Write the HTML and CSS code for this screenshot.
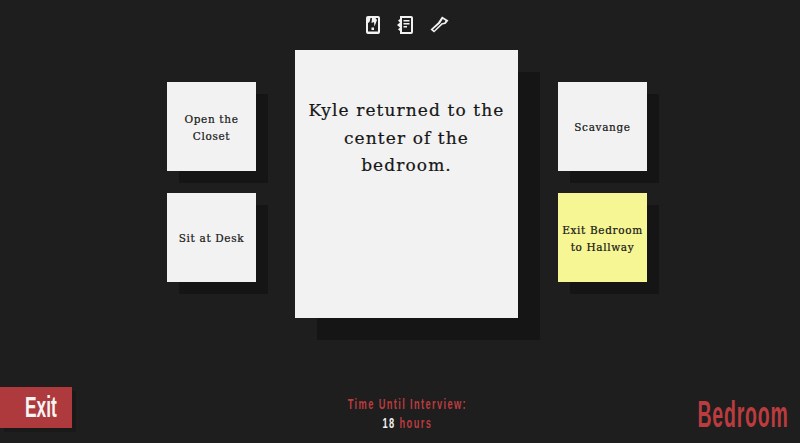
FILE: index.html
```html
<!DOCTYPE html>
<html lang="en">
<head>
<meta charset="utf-8">
<title>Bedroom</title>
<link rel="stylesheet" href="styles.css">
</head>
<body>
<div class="page">
  <nav class="tools">
    <svg class="icon" viewBox="0 0 14 18"><path fill="#f2f2f2" fill-rule="evenodd" d="M2 0H12Q14 0 14 2V16Q14 18 12 18H2Q0 18 0 16V2Q0 0 2 0ZM2 2V15.500H12V2H9.500L11 4 8.500 10.500 8 6 5.500 7 6 2Z"/><path fill="#f2f2f2" d="M5.500 11.500h2.500v2.500H5.500zM2 2h2.500L3.500 6 2 7z"/></svg>
    <svg class="icon wide" viewBox="0 0 16 18"><path fill="#f2f2f2" fill-rule="evenodd" d="M3 0H14Q16 0 16 2V16Q16 18 14 18H3V15L1 13.500 3 11.500 0 9 3 6.500 1 4.500 3 3ZM5 2V16H14V2ZM6.500 4H12.500V5.500H6.500ZM6.500 7H12.500V8.500H6.500ZM6.500 10H10V11.500H6.500Z"/></svg>
    <svg class="icon wider" viewBox="0 0 19 17"><path fill="#f2f2f2" fill-rule="evenodd" d="M0.500 13.500 8 6.500 12 0.500 18.500 4.500 15.500 8 12.500 8.500 4 16.500ZM3 13.600 4.200 14.600 11.500 7.200 14.500 6.500 15.500 4.800 12.800 3 10 7.500Z"/></svg>
  </nav>
  <main class="stage">
    <div class="side">
      <div class="card small"><span>Open the<br>Closet</span></div>
      <div class="card small"><span>Sit at Desk</span></div>
    </div>
    <div class="card story">Kyle returned to the center of the bedroom.</div>
    <div class="side">
      <div class="card small"><span>Scavange</span></div>
      <div class="card small exit-room"><span>Exit Bedroom<br>to Hallway</span></div>
    </div>
  </main>
  <footer class="foot">
    <div class="exit"><span class="exit-label">Exit</span></div>
    <div class="timer">
      <div class="timer-line">Time Until Interview:</div>
      <div class="timer-line"><b>18</b> hours</div>
    </div>
    <div class="room">Bedroom</div>
  </footer>
</div>
</body>
</html>
```
FILE: styles.css
```css
* { box-sizing: border-box; }
html, body { margin: 0; height: 100%; }
body { background: #1e1e1e; overflow: hidden; }
.page { width: 800px; height: 443px; display: flex; flex-direction: column; }
.tools { height: 50px; display: flex; justify-content: center; align-items: flex-start; gap: 17px; padding: 16px 0 0 15px; }
.icon { width: 14px; height: 18px; display: block; }
.wide { width: 16px; }
.wider { width: 19px; height: 17px; }
.stage { display: flex; justify-content: flex-start; padding-left: 167px; gap: 39px; height: 268px; }
.side { display: flex; flex-direction: column; gap: 22px; padding-top: 32px; }
.card { background: #f2f2f2; color: #161616; font-family: "DejaVu Serif", serif; text-align: center; -webkit-text-stroke: .2px #161616; }
.small { width: 89px; height: 89px; display: flex; align-items: center; justify-content: center; padding-top: 2px; font-size: 10.500px; line-height: 17px; letter-spacing: .65px; box-shadow: 12px 12px 0 #151515; }
.exit-room { background: #f6f794; }
.story { width: 223px; height: 268px; padding: 47px 8px 0; font-size: 17px; line-height: 27.500px; letter-spacing: 1.100px; box-shadow: 22px 22px 0 #151515; }
.side:last-child { margin-left: 1px; }
.foot { flex: 1; position: relative; display: flex; justify-content: center; color: #bb3c3f; font-family: "Liberation Sans", sans-serif; }
.timer { margin-top: 77px; margin-left: 14px; text-align: center; font-size: 14px; font-weight: 700; line-height: 19px; letter-spacing: 2.100px; }
.timer-line { transform: scaleX(.66); white-space: nowrap; }
.timer b { color: #f2f2f2; font-weight: 700; }
.exit { position: absolute; left: 0; top: 69px; width: 72px; height: 41px; background: #ae3a3e; box-shadow: 4px 4px 0 #191919; color: #f4f4f4; font-size: 29px; font-weight: 700; line-height: 41px; padding-left: 25px; }
.exit-label { display: inline-block; transform: scaleX(.6); transform-origin: left center; }
.room { position: absolute; right: 11px; top: 75px; font-size: 36px; line-height: 44px; font-weight: 700; letter-spacing: 1.500px; transform: scaleX(.54); transform-origin: right center; }
```
